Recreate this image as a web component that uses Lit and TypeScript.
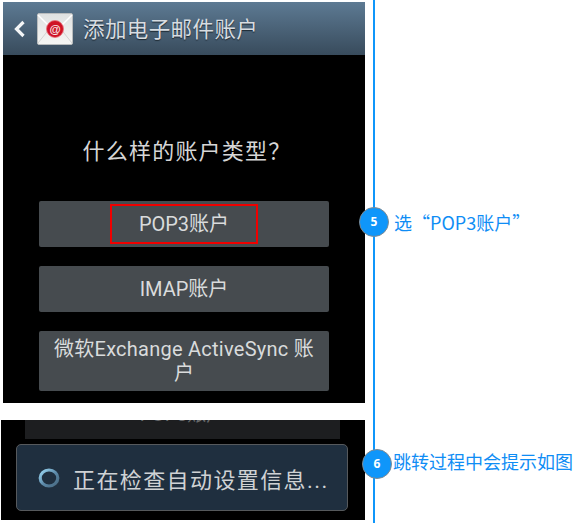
import { LitElement, css, html } from "lit";
import { customElement } from "lit/decorators.js";

@customElement("app-root")
export class AppRoot extends LitElement {
  static styles = css`
    :host {
      display: grid;
      grid-template-columns: 373px 202px;
      width: 575px;
      height: 523px;
      overflow: hidden;
      background: #fff;
      font-family: Roboto, "Noto Sans CJK SC", sans-serif;
    }

    .shots {
      display: flex;
      flex-direction: column;
      padding-top: 2px;
    }

    .screen {
      margin-left: 3px;
      width: 362px;
      height: 401px;
      background: #000;
    }

    .titlebar {
      display: flex;
      align-items: center;
      height: 53px;
      background: linear-gradient(180deg, #5d7a93, #384b5c);
    }

    .back {
      display: block;
      margin-left: 10px;
    }

    .mail {
      display: block;
      margin-left: 11px;
    }

    .title {
      margin: 0 0 2px 10px;
      color: #d8dde2;
      font-size: 21.5px;
      letter-spacing: 0.4px;
      text-shadow: 0 1px 1px #1c2730;
    }

    .question {
      margin: 82px 0 0;
      padding-left: 6px;
      color: #d6d6d6;
      font-size: 22px;
      line-height: 30px;
      letter-spacing: 1.2px;
      text-align: center;
    }

    .choices {
      display: flex;
      flex-direction: column;
      gap: 19px;
      margin: 34px 0 0 36px;
      width: 290px;
    }

    .choice {
      display: flex;
      align-items: center;
      justify-content: center;
      height: 46px;
      border-radius: 2px;
      background: #464b4f;
      color: #d9dbdc;
      font-size: 20px;
      line-height: 24px;
      text-align: center;
    }

    .choice.tall {
      box-sizing: border-box;
      height: 60px;
      padding: 0 12px;
      letter-spacing: 0.25px;
    }

    .marked {
      display: flex;
      align-items: center;
      justify-content: center;
      box-sizing: border-box;
      width: 148px;
      height: 40px;
      border: 2px solid #f00000;
    }

    .screen.progress {
      margin: 17px 0 0 1px;
      width: 364px;
      height: 100px;
      overflow: hidden;
    }

    .ghost {
      display: flex;
      justify-content: center;
      align-items: flex-end;
      margin-left: 24px;
      width: 315px;
      height: 19px;
      overflow: hidden;
      background: #1d1e20;
      color: #66686a;
      font-size: 19px;
      line-height: 24px;
    }

    .ghost span {
      transform: translateY(-12px);
    }

    .dialog {
      display: flex;
      align-items: center;
      box-sizing: border-box;
      margin: 5px 0 0 15px;
      width: 332px;
      height: 67px;
      border: 1px solid #56595c;
      border-radius: 5px;
      background: #1f2f3f;
    }

    .spinner {
      display: block;
      margin-left: 20px;
    }

    .dialog-text {
      margin-left: 12px;
      color: #cfd2d4;
      font-size: 22px;
      letter-spacing: 1.4px;
      white-space: nowrap;
    }

    .notes {
      display: flex;
      flex-direction: column;
      border-left: 2px solid #0f96fa;
      box-sizing: border-box;
      height: 523px;
    }

    .note {
      display: flex;
      align-items: center;
      margin-left: -16px;
      color: #0f8df5;
      font-family: "Noto Sans CJK SC", sans-serif;
      font-size: 18px;
      line-height: 30px;
      white-space: nowrap;
    }

    .note.first {
      margin-top: 207px;
    }

    .note.second {
      margin: 209px 0 0 -13px;
    }

    .badge {
      display: flex;
      flex: none;
      align-items: center;
      justify-content: center;
      box-sizing: border-box;
      width: 30px;
      height: 30px;
      margin-right: 5px;
      border: 1px solid #7d8a94;
      border-radius: 50%;
      background: #0f96fa;
      color: #fff;
      font-family: "Open Sans", sans-serif;
      font-size: 12px;
      font-weight: 700;
    }

    .note.second .label {
      margin: 0 0 6px -4px;
    }
  `;

  private renderMailIcon() {
    return html`<svg class="mail" width="36" height="32" viewBox="0 0 36 32" aria-hidden="true">
      <defs>
        <linearGradient id="paper" x1="0" y1="0" x2="0" y2="1">
          <stop offset="0" stop-color="#dfe1e1"></stop>
          <stop offset="1" stop-color="#f6f6f4"></stop>
        </linearGradient>
      </defs>
      <rect x="0.5" y="0.5" width="35" height="31" rx="1.5" fill="url(#paper)" stroke="#b9bcbd"></rect>
      <path d="M1 2 L18 19 L35 2" fill="none" stroke="#fff" stroke-width="1.5"></path>
      <path d="M1 30 L13 15 M35 30 L23 15" fill="none" stroke="#d3d4d3" stroke-width="1"></path>
      <circle cx="18" cy="16" r="8.5" fill="#cf1226"></circle>
      <circle cx="18" cy="16" r="8.5" fill="none" stroke="#e8737d" stroke-width="0.8"></circle>
      <text x="18" y="20" text-anchor="middle" font-family="Liberation Sans, sans-serif" font-size="11.5" font-weight="700" fill="#f6e4e4">@</text>
    </svg>`;
  }

  render() {
    return html`
      <div class="shots">
        <section class="screen">
          <header class="titlebar">
            <svg class="back" width="13" height="18" viewBox="0 0 13 18" aria-hidden="true">
              <path d="M10.5 2 L3.5 9 L10.5 16" fill="none" stroke="#f4f6f7" stroke-width="3.2"></path>
            </svg>
            ${this.renderMailIcon()}
            <span class="title">添加电子邮件账户</span>
          </header>
          <p class="question">什么样的账户类型？</p>
          <div class="choices">
            <div class="choice"><span class="marked">POP3账户</span></div>
            <div class="choice">IMAP账户</div>
            <div class="choice tall">微软Exchange ActiveSync 账户</div>
          </div>
        </section>
        <section class="screen progress">
          <div class="ghost"><span>POP3账户</span></div>
          <div class="dialog">
            <svg class="spinner" width="24" height="22" viewBox="0 0 24 22" aria-hidden="true">
              <defs>
                <linearGradient id="ring" x1="0" y1="0" x2="1" y2="1">
                  <stop offset="0" stop-color="#9ad8f4"></stop>
                  <stop offset="0.55" stop-color="#5a87a6"></stop>
                  <stop offset="1" stop-color="#47687f"></stop>
                </linearGradient>
              </defs>
              <ellipse cx="12" cy="11" rx="8.8" ry="8" fill="none" stroke="url(#ring)" stroke-width="3.2"></ellipse>
            </svg>
            <span class="dialog-text">正在检查自动设置信息...</span>
          </div>
        </section>
      </div>
      <aside class="notes">
        <div class="note first"><span class="badge">5</span><span class="label">选“POP3账户”</span></div>
        <div class="note second"><span class="badge">6</span><span class="label">跳转过程中会提示如图</span></div>
      </aside>
    `;
  }
}
